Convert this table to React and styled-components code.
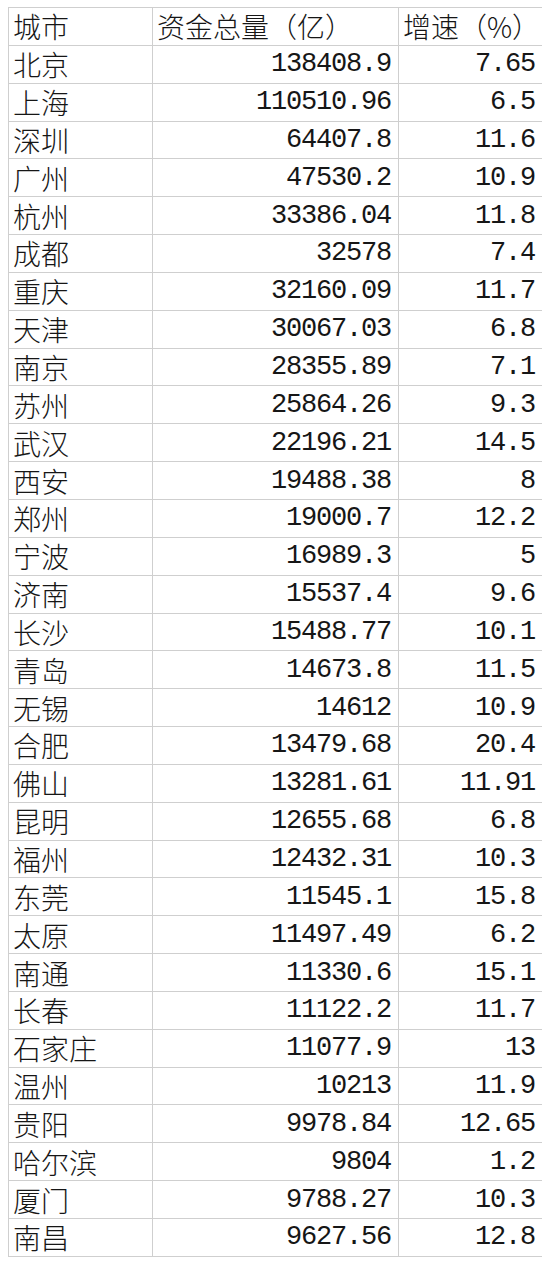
import styled, { createGlobalStyle } from "styled-components";

const rows = [
    ["北京", "138408.9", "7.65"],
    ["上海", "110510.96", "6.5"],
    ["深圳", "64407.8", "11.6"],
    ["广州", "47530.2", "10.9"],
    ["杭州", "33386.04", "11.8"],
    ["成都", "32578", "7.4"],
    ["重庆", "32160.09", "11.7"],
    ["天津", "30067.03", "6.8"],
    ["南京", "28355.89", "7.1"],
    ["苏州", "25864.26", "9.3"],
    ["武汉", "22196.21", "14.5"],
    ["西安", "19488.38", "8"],
    ["郑州", "19000.7", "12.2"],
    ["宁波", "16989.3", "5"],
    ["济南", "15537.4", "9.6"],
    ["长沙", "15488.77", "10.1"],
    ["青岛", "14673.8", "11.5"],
    ["无锡", "14612", "10.9"],
    ["合肥", "13479.68", "20.4"],
    ["佛山", "13281.61", "11.91"],
    ["昆明", "12655.68", "6.8"],
    ["福州", "12432.31", "10.3"],
    ["东莞", "11545.1", "15.8"],
    ["太原", "11497.49", "6.2"],
    ["南通", "11330.6", "15.1"],
    ["长春", "11122.2", "11.7"],
    ["石家庄", "11077.9", "13"],
    ["温州", "10213", "11.9"],
    ["贵阳", "9978.84", "12.65"],
    ["哈尔滨", "9804", "1.2"],
    ["厦门", "9788.27", "10.3"],
    ["南昌", "9627.56", "12.8"],
];

const App = () => {
    return (
        <>
            <GlobalStyle />
            <Sheet>
                <TextCell>城市</TextCell>
                <TextCell>资金总量（亿）</TextCell>
                <TextCell>增速（%）</TextCell>
                {rows.map(([city, total, growth]) => (
                    <Row key={city}>
                        <TextCell>{city}</TextCell>
                        <NumCell>{total}</NumCell>
                        <NumCell>{growth}</NumCell>
                    </Row>
                ))}
            </Sheet>
        </>
    );
};

export default App;

const GlobalStyle = createGlobalStyle`
    html, body {
        margin: 0;
        padding: 0;
        background: #ffffff;
    }
`;

const Sheet = styled.div`
    margin: 7px 0 0 8px;
    width: 534px;
    box-sizing: border-box;
    display: grid;
    grid-template-columns: 143px 245px 143px;
    grid-auto-rows: 36.85px;
    gap: 1px;
    padding: 1px;
    background: #cfcfcf;
`;

const Row = styled.div`
    display: contents;
`;

const Cell = styled.div`
    background: #ffffff;
    color: #161616;
    display: flex;
    align-items: center;
    white-space: nowrap;
    line-height: 36px;
`;

const TextCell = styled(Cell)`
    padding-left: 4px;
    font-family: "Noto Sans CJK SC", "Noto Sans", sans-serif;
    font-size: 28px;
    font-weight: 300;
`;

const NumCell = styled(Cell)`
    justify-content: flex-end;
    padding-right: 7px;
    font-family: "Liberation Mono", "DejaVu Sans Mono", monospace;
    font-size: 27px;
    letter-spacing: -1.2px;
`;
